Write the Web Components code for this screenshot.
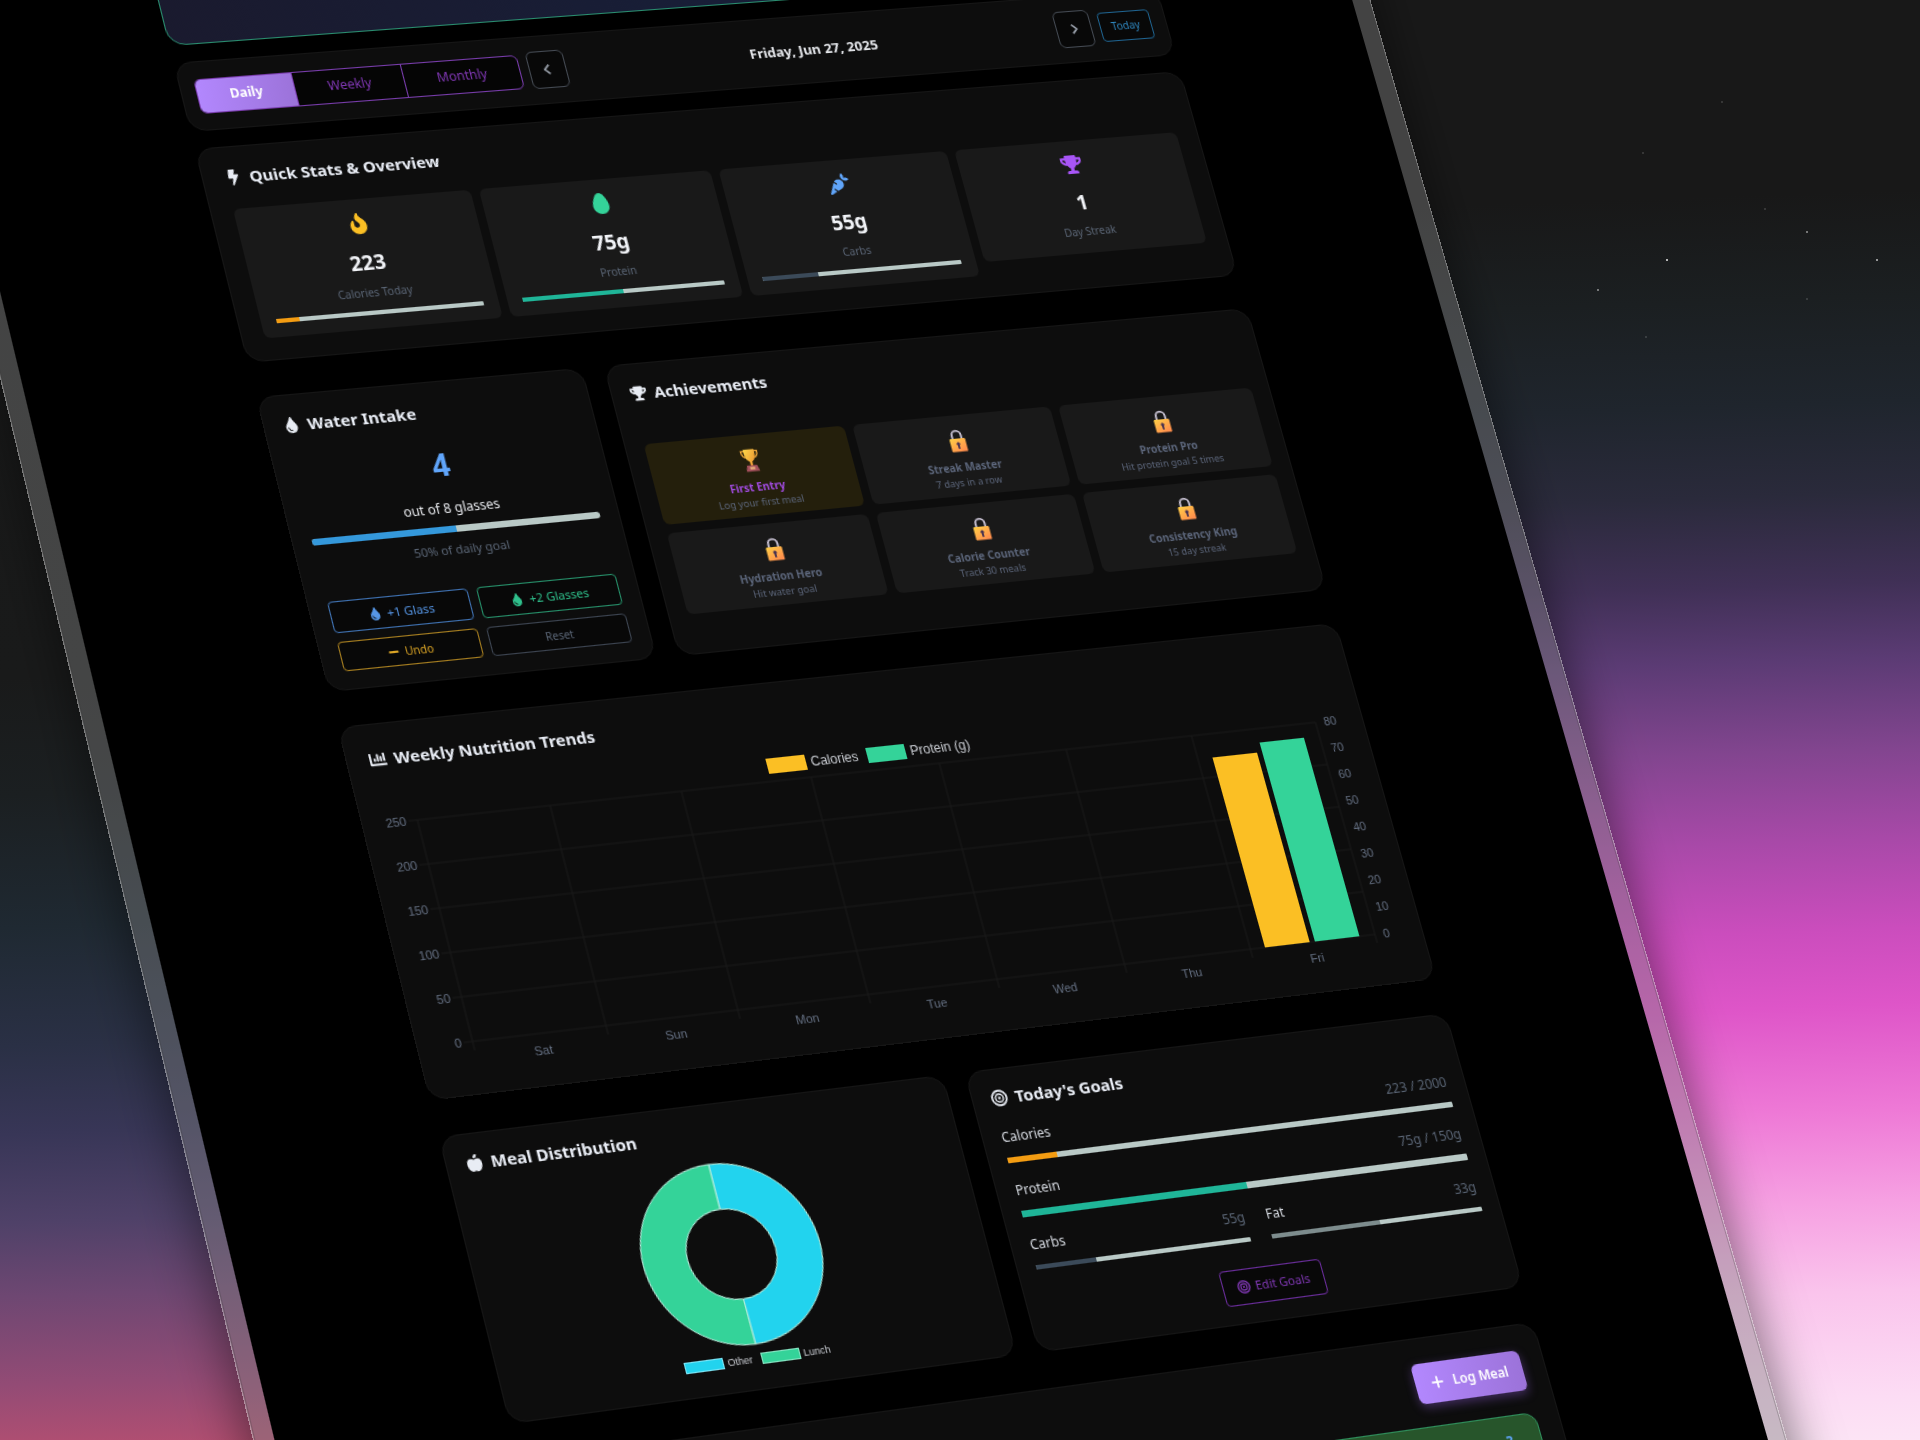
<!DOCTYPE html>
<html lang="en">
<head>
<meta charset="utf-8">
<title>Nutrition dashboard</title>
<style>
  html, body { margin: 0; height: 100%; }
  body { overflow: hidden; background: #181818; color: #e5e7eb; font: 12px/18px "Noto Sans", "Open Sans", sans-serif; }
</style>
</head>
<body>
<tilt-stage>
  <tablet-frame>
    <hero-banner slot="top"></hero-banner>
    <date-bar slot="top" date="Friday, Jun 27, 2025"></date-bar>

    <ui-card roomy icon="bolt" heading="Quick Stats &amp; Overview">
      <stat-row>
        <stat-tile icon="fire" value="223" label="Calories Today" percent="11" tone="#fbbf24" bar="#f39c12"></stat-tile>
        <stat-tile icon="egg" value="75g" label="Protein" percent="50" tone="#34d399" bar="#1fb598"></stat-tile>
        <stat-tile icon="carrot" value="55g" label="Carbs" percent="28" tone="#60a5fa" bar="#3b4a59"></stat-tile>
        <stat-tile icon="trophy" value="1" label="Day Streak" tone="#a855f7"></stat-tile>
      </stat-row>
    </ui-card>

    <card-row cols="calc((100% - 40px) / 3) 1fr">
      <ui-card icon="drop" heading="Water Intake"><water-intake></water-intake></ui-card>
      <ui-card icon="trophy" heading="Achievements">
        <badge-grid>
          <badge-tile earned heading="First Entry" note="Log your first meal"></badge-tile>
          <badge-tile heading="Streak Master" note="7 days in a row"></badge-tile>
          <badge-tile heading="Protein Pro" note="Hit protein goal 5 times"></badge-tile>
          <badge-tile heading="Hydration Hero" note="Hit water goal"></badge-tile>
          <badge-tile heading="Calorie Counter" note="Track 30 meals"></badge-tile>
          <badge-tile heading="Consistency King" note="15 day streak"></badge-tile>
        </badge-grid>
      </ui-card>
    </card-row>

    <ui-card wide icon="chart" heading="Weekly Nutrition Trends"><trend-chart></trend-chart></ui-card>

    <card-row cols="1fr 1fr">
      <ui-card snug icon="apple" heading="Meal Distribution"><meal-donut></meal-donut></ui-card>
      <ui-card snug icon="target" heading="Today's Goals"><goal-list></goal-list></ui-card>
    </card-row>

    <meal-log></meal-log>
  </tablet-frame>
</tilt-stage>

<script>
const ICONS = {
  bolt: ['0 0 320 512', '<path d="M296 160H180.6l42.6-129.8C227.2 15 215.7 0 200 0H56C44 0 33.8 8.9 32.2 20.8l-32 240C-1.7 275.2 9.5 288 24 288h118.7L96.6 482.5c-3.6 15.2 8 29.5 23.3 29.5 8.4 0 16.4-4.4 20.8-12l176-304c9.3-15.9-2.2-36-20.7-36z"/>'],
  fire: ['0 0 384 512', '<path d="M216 23.86c0-23.8-30.65-32.77-44.15-13.04C48 191.85 224 200 224 288c0 35.63-29.11 64.46-64.85 63.99-35.17-.45-63.15-29.77-63.15-64.94v-85.51c0-21.7-26.47-32.23-41.43-16.5C27.8 213.16 0 261.33 0 320c0 105.87 86.13 192 192 192s192-86.13 192-192c0-170.29-168-193-168-296.14z"/>'],
  egg: ['0 0 384 512', '<path d="M192 0C86 0 0 214 0 320s86 192 192 192 192-86 192-192S298 0 192 0z"/>'],
  carrot: ['0 0 512 512', '<path d="M298.2 156.6c-52.7-25.7-114.5-10.5-150.2 32.8l55.2 55.2c6.3 6.3 6.3 16.4 0 22.6-3.1 3.1-7.2 4.7-11.3 4.7s-8.2-1.6-11.3-4.7L130.4 217 2.3 479.7c-2.9 6-3.1 13.3 0 19.7 5.4 11.1 18.9 15.7 30 10.3l133.6-65.2-49.2-49.2c-6.3-6.2-6.3-16.4 0-22.6 6.3-6.2 16.4-6.2 22.6 0l57 57 102-49.8c24-11.7 44.5-31.3 57.1-57.1 30.1-61.7 4.5-136.1-57.2-166.2zm92.1-34.9C409.8 81 399.7 32.9 360 0c-50.3 41.7-52.5 107.5-7.9 151.9l8 8c44.4 44.6 110.3 42.4 151.9-7.9-32.9-39.7-81-49.8-121.7-30.3z"/>'],
  trophy: ['0 0 576 512', '<path d="M552 64H448V24c0-13.3-10.7-24-24-24H152c-13.3 0-24 10.7-24 24v40H24C10.7 64 0 74.7 0 88v56c0 35.7 22.5 72.4 61.9 100.7 31.5 22.7 69.8 37.1 110 41.7C203.3 338.5 240 360 240 360v72h-48c-35.3 0-64 20.7-64 56v12c0 6.6 5.4 12 12 12h296c6.6 0 12-5.4 12-12v-12c0-35.3-28.7-56-64-56h-48v-72s36.7-21.5 68.1-73.6c40.3-4.6 78.6-19 110-41.7 39.3-28.3 61.9-65 61.9-100.7V88c0-13.3-10.7-24-24-24zM99.3 192.8C74.9 175.2 64 155.6 64 144v-16h64.2c1 32.6 5.8 61.2 12.8 86.2-15.1-5.2-29.2-12.4-41.7-21.4zM512 144c0 16.1-17.7 36.1-35.3 48.8-12.5 9-26.7 16.2-41.8 21.4 7-25 11.8-53.6 12.8-86.2H512v16z"/>'],
  drop: ['0 0 352 512', '<path d="M205.22 22.09c-7.94-28.78-49.44-30.12-58.44 0C100.01 179.85 0 222.72 0 333.91 0 432.35 78.72 512 176 512s176-79.65 176-178.09c0-111.75-99.79-153.34-146.78-311.82zM176 448c-61.75 0-112-50.25-112-112 0-8.84 7.16-16 16-16s16 7.16 16 16c0 44.11 35.89 80 80 80 8.84 0 16 7.16 16 16s-7.16 16-16 16z"/>'],
  chart: ['0 0 512 512', '<path d="M332.8 320h38.4c6.4 0 12.8-6.4 12.8-12.8V172.8c0-6.4-6.4-12.8-12.8-12.8h-38.4c-6.4 0-12.8 6.4-12.8 12.8v134.4c0 6.4 6.4 12.8 12.8 12.8zm96 0h38.4c6.4 0 12.8-6.4 12.8-12.8V76.8c0-6.4-6.4-12.8-12.8-12.8h-38.4c-6.4 0-12.8 6.4-12.8 12.8v230.4c0 6.4 6.4 12.8 12.8 12.8zm-288 0h38.4c6.4 0 12.8-6.4 12.8-12.8v-70.4c0-6.4-6.4-12.8-12.8-12.8h-38.4c-6.4 0-12.8 6.4-12.8 12.8v70.4c0 6.4 6.4 12.8 12.8 12.8zm96 0h38.4c6.4 0 12.8-6.4 12.8-12.8V108.8c0-6.4-6.4-12.8-12.8-12.8h-38.4c-6.4 0-12.8 6.4-12.8 12.8v198.4c0 6.4 6.4 12.8 12.8 12.8zM496 384H64V80c0-8.84-7.16-16-16-16H16C7.16 64 0 71.16 0 80v336c0 17.67 14.33 32 32 32h464c8.84 0 16-7.16 16-16v-32c0-8.84-7.16-16-16-16z"/>'],
  apple: ['0 0 448 512', '<path d="M350.85 129c25.97 4.67 47.27 18.67 63.92 42 14.65 20.67 24.64 46.67 29.96 78 4.67 28.67 4.32 57.33-1 86-7.99 47.33-23.97 87-47.94 119-28.64 38.67-64.59 58-107.87 58-10.66 0-22.3-3.33-34.96-10-8.66-5.33-18.31-8-28.97-8s-20.3 2.67-28.97 8c-12.66 6.67-24.3 10-34.96 10-43.28 0-79.23-19.33-107.87-58-23.97-32-39.95-71.67-47.94-119-5.32-28.67-5.67-57.33-1-86 5.32-31.33 15.31-57.33 29.96-78 16.65-23.33 37.95-37.33 63.92-42 15.98-2.67 37.95-.33 65.92 7 23.97 6.67 44.28 14.67 60.93 24 16.65-9.33 36.96-17.33 60.93-24 27.98-7.33 49.96-9.67 65.94-7zm-54.94-41c-9.32 8.67-21.65 15-36.96 19-10.66 3.33-22.3 5-34.96 5l-14.98-1c-1.33-9.33-1.33-20 0-32 2.67-24 10.32-42.33 22.97-55 9.32-8.67 21.65-15 36.96-19 10.66-3.33 22.3-5 34.96-5l14.98 1 1 15c0 12.67-1.67 24.33-4.99 35-3.99 15.33-10.31 27.67-18.98 37z"/>'],
  target: ['0 0 512 512', '<g fill="none" stroke="currentColor"><circle cx="256" cy="256" r="226" stroke-width="58"/><circle cx="256" cy="256" r="122" stroke-width="48"/></g><circle cx="256" cy="256" r="42"/>'],
  minus: ['0 0 448 512', '<rect y="208" width="448" height="96" rx="32"/>'],
  plus: ['0 0 448 512', '<path d="M192 64h64v160h160v64H256v160h-64V288H32v-64h160z"/>'],
  left: ['0 0 320 512', '<path d="M240 96L80 256l160 160" fill="none" stroke="currentColor" stroke-width="64"/>'],
  right: ['0 0 320 512', '<path d="M80 96l160 160L80 416" fill="none" stroke="currentColor" stroke-width="64"/>'],
  lock: ['0 0 24 28', '<defs><linearGradient id="body" x2=".6" y2="1"><stop offset="0" stop-color="#ffd046"/><stop offset="1" stop-color="#ff8f4c"/></linearGradient></defs><path d="M6.500 13V7.500a5.500 5.500 0 0 1 11 0V13" fill="none" stroke="#c9c3d4" stroke-width="2.400"/><rect x="2.500" y="11.500" width="19" height="16" rx="1.500" fill="url(#body)"/><path d="M12 16a2.200 2.200 0 0 1 1.200 4v4h-2.400v-4A2.200 2.200 0 0 1 12 16z" fill="#4a3350"/>'],
  cup: ['0 0 24 28', '<defs><linearGradient id="gold" x2="1" y2="1"><stop offset="0" stop-color="#ffd84a"/><stop offset="1" stop-color="#e88a2c"/></linearGradient></defs><path d="M6 3H2.500c0 5 1.500 7.500 5 8M18 3h3.500c0 5-1.500 7.500-5 8" fill="none" stroke="#f3a93a" stroke-width="1.800"/><path d="M5.500 1h13c0 8-1 13-5 14.500V21h-3v-5.500C6.500 14 5.500 9 5.500 1z" fill="url(#gold)"/><path d="M6 20h12l2 7.500H4z" fill="#a4505c"/><rect x="9" y="22" width="6" height="3" fill="#e9b07a"/>']
};

const sheet = `<style>
  *, *::before { box-sizing: border-box; }
  button { font: inherit; color: inherit; background: none; cursor: pointer; }
  h2, p { margin: 0; }
</style>`;

class Base extends HTMLElement {
  connectedCallback() {
    if (this.shadowRoot) return;
    this.attachShadow({ mode: 'open' }).innerHTML = sheet + this.render();
  }
  at(name) { return this.getAttribute(name) || ''; }
}
const define = (name, render) => customElements.define(name, class extends Base { render() { return render(this); } });

define('ui-icon', el => {
  const [box, art] = ICONS[el.at('name')];
  return `<style>:host { display: inline-flex; flex: none; width: var(--icon, 15px); height: var(--icon, 15px); }
    svg { width: 100%; height: 100%; }</style>
    <svg viewBox="${box}" fill="currentColor" aria-hidden="true">${art}</svg>`;
});

/* The wallpaper and the projection of the tablet on it. */
define('tilt-stage', () => `<style>
  :host { display: block; position: relative; height: 100vh; overflow: hidden;
    background:
      linear-gradient(178deg, #181818 0%, #191a1a 46%, #1b1f21 54%, #1f2932 63%, #2a3045 71%, #383657 77%, #4f4168 83%, #6e4772 88%, #934b75 94%, #bd5070 100%) 0 0 / 50% 100% no-repeat,
      linear-gradient(178deg, #181818 0%, #181818 17%, #1b1f21 24%, #1f252d 31%, #2a2a3b 37%, #403056 43%, #5b3b74 48%, #82458f 54%, #a849a8 60%, #cb4dbd 66%, #de55c8 71%, #ee79d6 78%, #f6a0e2 84%, #fac4ec 90%, #fcdcf4 97%, #fce4f5 100%); }
  .stars { position: absolute; right: 0; top: 0; width: 480px; height: 400px; }
  .plane { width: 1360px; transform-origin: 0 0;
    transform: matrix3d(1.10897, -.0797, 0, .0000472, .25258, 1.04621, 0, -.00003664, 0, 0, 1, 0, -127.73, -162.23, 0, 1.001084); }
  </style>
  <svg class="stars" viewBox="0 0 480 400" aria-hidden="true"><g fill="#e8e8e8">
    <circle cx="227" cy="260" r="1"/><circle cx="158" cy="290" r="1" opacity=".6"/><circle cx="437" cy="260" r="1" opacity=".8"/><circle cx="367" cy="232" r="1" opacity=".6"/><circle cx="282" cy="102" r="1" opacity=".2"/><circle cx="203" cy="153" r="1" opacity=".2"/><circle cx="367" cy="299" r="1" opacity=".2"/><circle cx="206" cy="337" r="1" opacity=".2"/><circle cx="325" cy="209" r="1" opacity=".2"/></g></svg>
  <div class="plane"><slot></slot></div>`);

define('tablet-frame', () => `<style>
  :host { display: block; border: 17px solid rgba(127,127,127,.42); border-radius: 34px; outline: 1px solid rgba(255,255,255,.45);
    padding: 37px 188px 40px 202px; background: #000; background-clip: padding-box; box-shadow: 0 16px 50px rgba(0,0,0,.55); }
  .top, .main { display: flex; flex-direction: column; }
  .top { gap: 16px; margin-bottom: 16px; }
  .main { gap: 32px; }
  </style><header class="top"><slot name="top"></slot></header><main class="main"><slot></slot></main>`);

define('hero-banner', () => `<style>
  :host { display: block; height: 160px; border: 1px solid #2a8f70; border-radius: 16px; background: linear-gradient(100deg, #1a1a2e, #16213e); }
  </style>`);

define('date-bar', el => `<style>
  :host { display: flex; align-items: center; gap: 8px; height: 64px; padding: 0 14px 0 13px; background: #0d0d0d; border: 1px solid #161616; border-radius: 16px; }
  .views { display: flex; height: 33px; border: 1px solid #7a3dae; border-radius: 6px; background: #050505; color: #8038b5; overflow: hidden; }
  .views button { border: 0; padding: 0 30px; }
  .views button + button { border-left: 1px solid #7a3dae; }
  .views button.on { margin: -1px; border-radius: 5px 0 0 5px; background: linear-gradient(100deg, #b388ff, #9b72d8); color: #fff; font-weight: 700; }
  .step { width: 35px; height: 36px; border: 1px solid #454b54; border-radius: 6px; background: #080808; color: #9aa1ac; display: grid; place-items: center; padding: 0; --icon: 14px; }
  .now { flex: 1; text-align: center; font-size: 13px; font-weight: 700; }
  .today { width: 51px; height: 29px; padding: 0; border: 1px solid #1f6491; border-radius: 4px; color: #2f87bf; font-size: 10px; background: #080808; }
  </style>
  <div class="views"><button class="on">Daily</button><button>Weekly</button><button>Monthly</button></div>
  <button class="step" aria-label="Previous day"><ui-icon name="left"></ui-icon></button>
  <div class="now">${el.at('date')}</div>
  <button class="step" aria-label="Next day"><ui-icon name="right"></ui-icon></button>
  <button class="today">Today</button>`);

define('ui-card', el => `<style>
  :host { display: flex; flex-direction: column; min-width: 0; padding: 16px 17px; background: #0d0d0d; border: 1px solid #161616; border-radius: 16px; }
  :host([wide]) { padding: 20px; }
  :host([roomy]) { padding: 17px 20px 20px; }
  :host([snug]) { padding: 14px 17px 16px; }
  h2 { display: flex; align-items: center; gap: 7px; margin-bottom: 16px; font-size: 15px; line-height: 22px; font-weight: 700; color: #e8ecf4; }
  :host([roomy]) h2 { margin-bottom: 19px; }
  ::slotted(*) { flex: 1; }
  </style><h2><ui-icon name="${el.at('icon')}"></ui-icon>${el.at('heading').replace('&', '&amp;')}</h2><slot></slot>`);

define('card-row', el => `<style>:host { display: grid; grid-template-columns: ${el.at('cols')}; gap: 20px; }</style><slot></slot>`);

define('meter-bar', el => `<style>
  :host { display: block; height: var(--thick, 4px); background: #b9c9c6; border-radius: 1px; overflow: hidden; }
  div { height: 100%; width: ${el.at('percent')}%; background: ${el.at('color')}; }
  </style><div role="progressbar" aria-valuenow="${el.at('percent')}"></div>`);

define('stat-row', () => `<style>:host { display: grid; grid-template-columns: repeat(4, 1fr); gap: 8px; align-items: start; }</style><slot></slot>`);

define('stat-tile', el => `<style>
  :host { display: flex; flex-direction: column; align-items: center; padding: 12px 14px 13px; border-radius: 6px; background: #191919; }
  ui-icon { color: ${el.at('tone')}; --icon: 20px; margin: 1px 0; }
  .value { margin-top: 12px; font-size: 19px; line-height: 28px; font-weight: 700; color: #f1f3f7; }
  .label { margin-top: 6px; font-size: 10px; line-height: 16px; color: #5a6575; }
  meter-bar { align-self: stretch; margin-top: 9px; }
  </style>
  <ui-icon name="${el.at('icon')}"></ui-icon><div class="value">${el.at('value')}</div><div class="label">${el.at('label')}</div>
  ${el.at('percent') ? `<meter-bar percent="${el.at('percent')}" color="${el.at('bar')}"></meter-bar>` : ''}`);

define('water-intake', () => `<style>
  :host { display: flex; flex-direction: column; text-align: center; }
  .count { font-size: 28px; line-height: 44px; font-weight: 700; color: #60a5fa; }
  .of { margin-top: 10px; line-height: 18px; }
  meter-bar { margin-top: 7px; --thick: 6px; border-radius: 3px; }
  .goal { margin-top: 7px; font-size: 11px; line-height: 18px; color: #5a6575; }
  .acts { display: grid; grid-template-columns: 1fr 1fr; grid-template-rows: 29px 27px; gap: 8px; margin-top: 27px; font-size: 11px; }
  button { display: flex; align-items: center; justify-content: center; gap: 5px; padding: 0; border: 1px solid; border-radius: 4px; background: #080808; --icon: 12px; }
  .blue { color: #5696e6; border-color: #3f72b3; }
  .green { color: #2fc08c; border-color: #26906a; }
  .amber { color: #dba526; border-color: #a98020; font-size: 10px; --icon: 10px; }
  .grey { color: #5a6575; border-color: #3d4552; font-size: 10px; }
  </style>
  <div class="count">4</div><div class="of">out of 8 glasses</div>
  <meter-bar percent="50" color="#3498db"></meter-bar><div class="goal">50% of daily goal</div>
  <div class="acts">
    <button class="blue"><ui-icon name="drop"></ui-icon>+1 Glass</button>
    <button class="green"><ui-icon name="drop"></ui-icon>+2 Glasses</button>
    <button class="amber"><ui-icon name="minus"></ui-icon>Undo</button>
    <button class="grey">Reset</button>
  </div>`);

define('badge-grid', () => `<style>:host { display: grid; grid-template-columns: repeat(3, 1fr); gap: 8px; align-content: center; }</style><slot></slot>`);

define('badge-tile', el => `<style>
  :host { display: flex; flex-direction: column; align-items: center; padding: 13px 8px 6px; border-radius: 6px; background: #191919; color: #5c667b; --icon: 22px; }
  :host([earned]) { background: #241f0c; }
  b { margin-top: 6px; font-size: 10px; line-height: 16px; }
  :host([earned]) b { color: #a14be0; }
  span { font-size: 9px; line-height: 13px; }
  </style><ui-icon name="${el.hasAttribute('earned') ? 'cup' : 'lock'}"></ui-icon><b>${el.at('heading')}</b><span>${el.at('note')}</span>`);

define('trend-chart', () => {
  const L = 29, T = 4, W = 840, H = 200;
  let grid = '', text = '';
  for (let i = 0; i <= 5; i++) {
    const y = T + i * 40;
    grid += `<path d="M${L - 8} ${y}H${L + W}"/>`;
    text += `<text x="${L - 10}" y="${y + 4}" text-anchor="end">${250 - i * 50}</text>`;
  }
  for (let i = 0; i <= 7; i++) grid += `<path d="M${L + i * 120} ${T}V${T + H + 8}"/>`;
  for (let i = 0; i <= 8; i++) text += `<text x="${L + W + 8}" y="${T + i * 25 + 4}">${80 - i * 10}</text>`;
  ['Sat', 'Sun', 'Mon', 'Tue', 'Wed', 'Thu', 'Fri'].forEach((d, i) => {
    text += `<text x="${L + 60 + i * 120}" y="${T + H + 19}" text-anchor="middle">${d}</text>`;
  });
  return `<style>
    :host { display: block; font-family: "Liberation Sans", Arial, sans-serif; }
    .legend { display: flex; justify-content: center; gap: 9px; margin-top: 10px; line-height: 14px; color: #c8cbd1; }
    .legend span { display: flex; gap: 4px; }
    .legend i { width: 36px; height: 14px; background: var(--c); }
    svg { display: block; width: 100%; height: 230px; margin-top: 3px; overflow: visible; }
    text { font-size: 11px; fill: #657083; }
    </style>
    <div class="legend"><span style="--c:#fbbf24"><i></i>Calories</span><span style="--c:#34d399"><i></i>Protein (g)</span></div>
    <svg viewBox="0 0 894 230" role="img" aria-label="Calories and protein by day"><g fill="none" stroke="#1b1b1b">${grid}</g>${text}
    <path d="M${L + 734} ${T + 22}h43V${T + H}h-43z" fill="#fbbf24"/><path d="M${L + 782} ${T + 13}h43V${T + H}h-43z" fill="#34d399"/></svg>`;
});

define('meal-donut', () => `<style>
  :host { display: flex; flex-direction: column; align-items: center; font: 9px/10px "Liberation Sans", Arial, sans-serif; color: #c3c6cc; }
  svg { width: 160px; height: 160px; overflow: visible; }
  .legend { display: flex; gap: 8px; margin-top: 8px; }
  .legend span { display: flex; gap: 3px; }
  .legend i { width: 35px; height: 10px; background: var(--c); border: 1px solid rgba(255,255,255,.4); }
  </style>
  <svg viewBox="-80 -80 160 160" role="img" aria-label="Meals by share"><g stroke="#b8eedd" stroke-width="1">
    <path d="M0-80A80 80 0 0 1 1 80L.5 40A40 40 0 0 0 0-40z" fill="#22d3ee"/>
    <path d="M1 80A80 80 0 0 1 0-80V-40A40 40 0 0 0 .5 40z" fill="#34d399"/></g></svg>
  <div class="legend"><span style="--c:#22d3ee"><i></i>Other</span><span style="--c:#34d399"><i></i>Lunch</span></div>`);

define('goal-line', el => `<style>
  :host { display: block; }
  div { display: flex; justify-content: space-between; margin-bottom: 9px; color: #d6dae1; }
  span:last-child { color: #5a6575; }
  </style><div><span>${el.at('label')}</span><span>${el.at('value')}</span></div>
  <meter-bar percent="${el.at('percent')}" color="${el.at('bar')}"></meter-bar>`);

define('goal-list', () => `<style>
  :host { display: flex; flex-direction: column; gap: 16px; }
  .cal { --thick: 5px; } .pro { --thick: 6px; }
  .pair { display: grid; grid-template-columns: 1fr 1fr; gap: 20px; }
  button { align-self: center; display: flex; align-items: center; gap: 5px; height: 32px; margin-top: 7px; padding: 0 13px; border: 1px solid #6a2d9c; border-radius: 4px; background: #080808; color: #8038b5; font-size: 11px; --icon: 12px; }
  </style>
  <goal-line class="cal" label="Calories" value="223 / 2000" percent="11" bar="#f39c12"></goal-line>
  <goal-line class="pro" label="Protein" value="75g / 150g" percent="50" bar="#1fb598"></goal-line>
  <div class="pair"><goal-line label="Carbs" value="55g" percent="28" bar="#3b4a59"></goal-line><goal-line label="Fat" value="33g" percent="51" bar="#7d8c8d"></goal-line></div>
  <button><ui-icon name="target"></ui-icon>Edit Goals</button>`);

define('meal-log', () => `<style>
  :host { display: flex; flex-direction: column; gap: 20px; padding: 22px 21px; background: #0d0d0d; border: 1px solid #161616; border-radius: 16px; }
  button { align-self: flex-end; display: flex; align-items: center; gap: 8px; height: 36px; padding: 0 14px; border: 0; border-radius: 6px; background: linear-gradient(100deg, #b388ff, #9b72d8); color: #fff; font-weight: 600; --icon: 14px; box-shadow: 0 3px 10px rgba(168,110,255,.35); }
  .meal { display: flex; justify-content: flex-end; height: 90px; padding: 13px 26px; border: 1px solid #2f8f5c; border-radius: 12px; background: #27552b; color: #60a5fa; font-weight: 700; }
  </style>
  <button><ui-icon name="plus"></ui-icon>Log Meal</button>
  <div class="meal">3</div>`);
</script>
</body>
</html>
